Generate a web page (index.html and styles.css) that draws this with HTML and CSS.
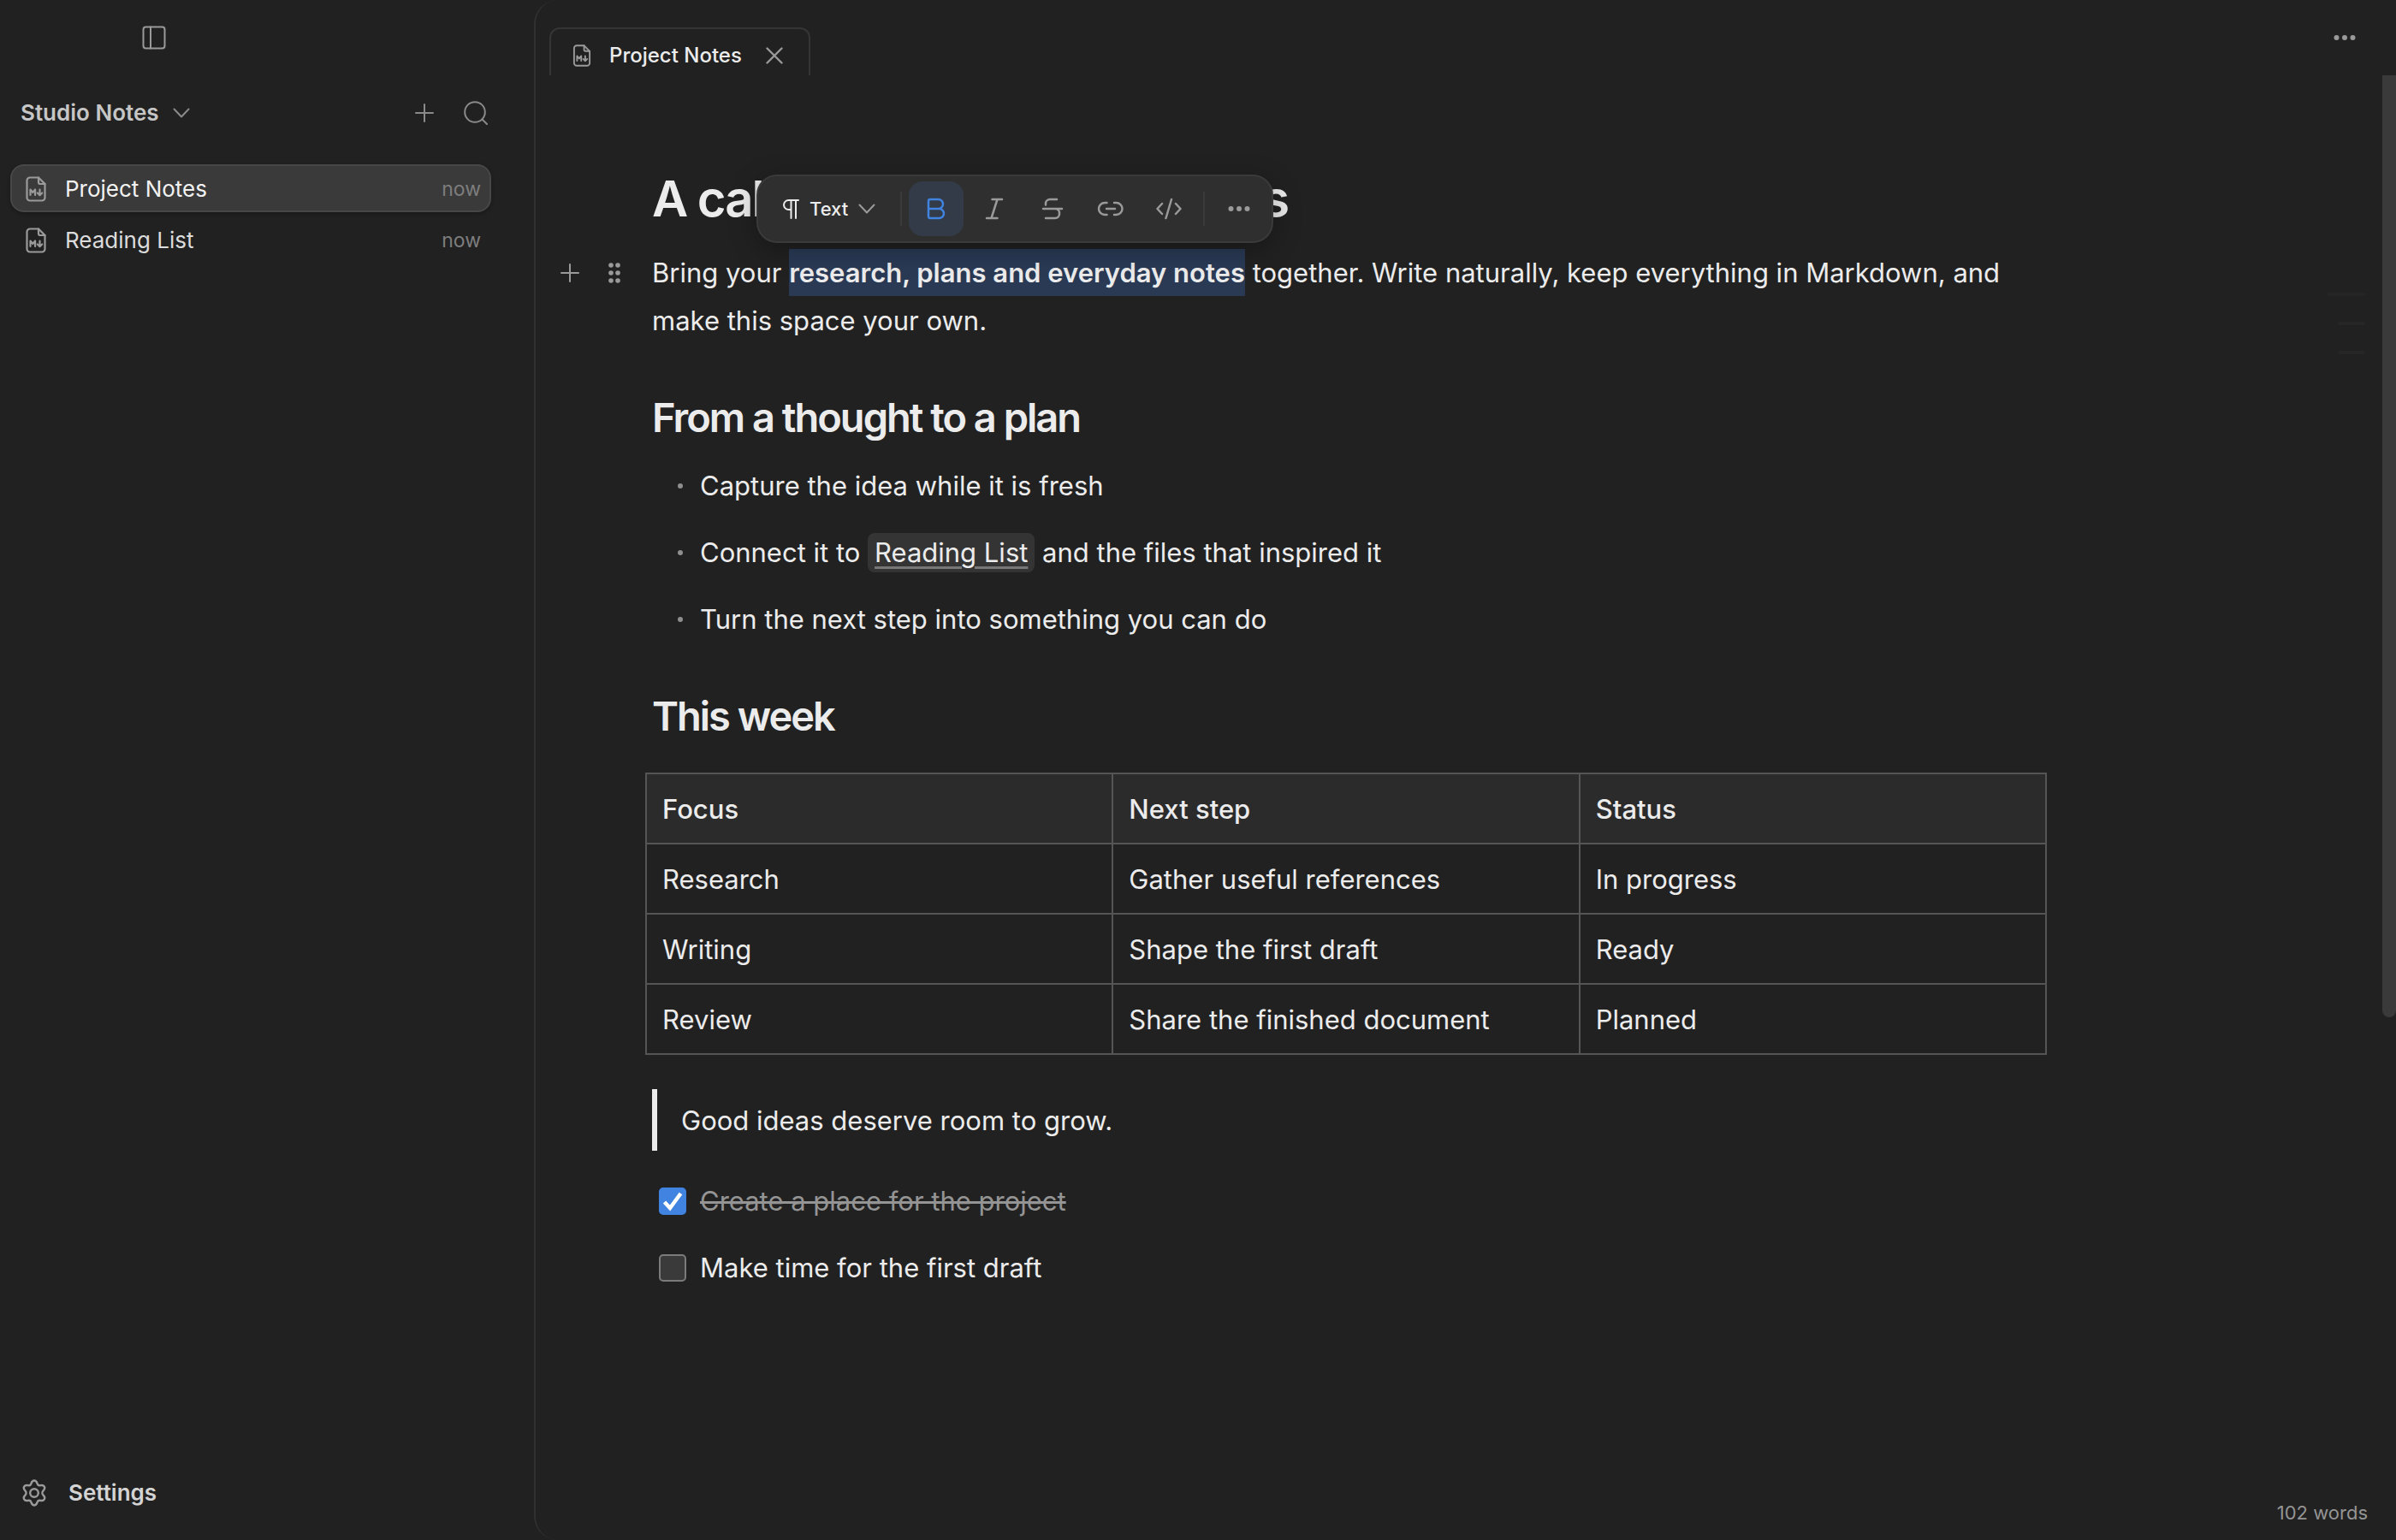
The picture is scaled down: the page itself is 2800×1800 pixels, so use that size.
FILE: index.html
```html
<!DOCTYPE html>
<html lang="en">
<head>
<meta charset="utf-8">
<title>Project Notes</title>
<link rel="stylesheet" href="styles.css">
</head>
<body>
<svg class="sprite" aria-hidden="true">
  <symbol id="icon-markdown" viewBox="0 0 24 30">
    <g stroke-width="2.200"><path d="M15 1.500H5A3.500 3.500 0 0 0 1.500 5v20A3.500 3.500 0 0 0 5 28.500h14a3.500 3.500 0 0 0 3.500-3.500V9z"/>
    <path d="M15 1.500V7a2 2 0 0 0 2 2h5.500"/>
    <path d="M5.500 22v-6.500l2.800 3.500 2.800-3.500V22M16.500 15.500V22M13.800 19.500l2.700 2.700 2.700-2.700"/></g>
  </symbol>
  <symbol id="icon-chevron" viewBox="0 0 20 12"><path d="M1.500 1.500 10 10.500l8.500-9"/></symbol>
  <symbol id="icon-plus" viewBox="0 0 22 22"><path d="M11 1v20M1 11h20"/></symbol>
  <symbol id="icon-dots" viewBox="0 0 26 8"><g fill="currentColor" stroke="none"><circle cx="3.500" cy="4" r="3"/><circle cx="13" cy="4" r="3"/><circle cx="22.500" cy="4" r="3"/></g></symbol>
</svg>
<div class="app">
  <aside class="sidebar">
    <div class="sidebar-top">
      <button class="icon-button" aria-label="Toggle sidebar">
        <svg class="icon toggle-icon" viewBox="0 0 28 28"><rect x="1.500" y="1.500" width="25" height="25" rx="3"/><path d="M10 1.500v25"/></svg>
      </button>
    </div>
    <div class="workspace">
      <button class="workspace-name">Studio Notes <svg class="icon chevron"><use href="#icon-chevron"/></svg></button>
      <button class="icon-button" aria-label="New note"><svg class="icon plus"><use href="#icon-plus"/></svg></button>
      <button class="icon-button" aria-label="Search"><svg class="icon search-icon" viewBox="0 0 28 28"><circle cx="13" cy="13" r="11.800"/><path d="m21.500 21.500 5.500 5.500"/></svg></button>
    </div>
    <nav class="notes">
      <a class="note selected" href="#project"><svg class="icon file"><use href="#icon-markdown"/></svg><span class="note-title">Project Notes</span><span class="note-time">now</span></a>
      <a class="note" href="#reading"><svg class="icon file"><use href="#icon-markdown"/></svg><span class="note-title">Reading List</span><span class="note-time">now</span></a>
    </nav>
    <button class="settings">
      <svg class="icon gear" viewBox="0 0 28 32"><path stroke-width="2.400" d="M10.300 5.300C11 3 12 1.500 14 1.500s3 1.500 3.700 3.800c.4 1.500 1.700 2.200 3.200 1.900 2-.5 3.900-.3 4.900 1.400 1 1.800.3 3.300-1.400 5-1.300 1.300-1.300 3.500 0 4.800 1.700 1.700 2.400 3.200 1.400 5-1 1.700-2.900 1.900-4.900 1.400-1.500-.3-2.800.4-3.200 1.900-.7 2.300-1.700 3.800-3.700 3.800s-3-1.500-3.700-3.800c-.4-1.500-1.700-2.200-3.200-1.900-2 .5-3.900.3-4.900-1.400-1-1.800-.3-3.300 1.400-5 1.300-1.300 1.300-3.500 0-4.800-1.700-1.700-2.400-3.200-1.400-5 1-1.700 2.900-1.900 4.900-1.400 1.500.3 2.800-.4 3.200-1.900z"/><circle stroke-width="2.400" cx="14" cy="16" r="4.800"/></svg>
      Settings
    </button>
  </aside>
  <main class="panel">
    <header class="tabs">
      <div class="tab">
        <svg class="icon file small"><use href="#icon-markdown"/></svg>
        <span>Project Notes</span>
        <button class="close" aria-label="Close tab"><svg class="icon cross" viewBox="0 0 20 20"><path stroke-width="2.400" d="m1.500 1.500 17 17M18.500 1.500l-17 17"/></svg></button>
      </div>
      <button class="icon-button" aria-label="More"><svg class="icon dots"><use href="#icon-dots"/></svg></button>
    </header>
    <div class="editor">
      <article class="document">
        <h1>A calm place for bright ideas</h1>
        <div class="block">
          <div class="handles">
            <button class="handle" aria-label="Add block"><svg class="icon plus"><use href="#icon-plus"/></svg></button>
            <button class="handle" aria-label="Move block"><svg class="icon grip" viewBox="0 0 16 26"><g fill="currentColor" stroke="none"><circle cx="4" cy="4" r="2.800"/><circle cx="12" cy="4" r="2.800"/><circle cx="4" cy="13" r="2.800"/><circle cx="12" cy="13" r="2.800"/><circle cx="4" cy="22" r="2.800"/><circle cx="12" cy="22" r="2.800"/></g></svg></button>
          </div>
          <p>Bring your <strong class="selection">research, plans and everyday notes</strong> together. Write naturally, keep everything in Markdown, and make this space your own.</p>
          <div class="toolbar" role="toolbar" aria-label="Formatting">
            <button class="block-type"><svg class="icon pilcrow" viewBox="0 0 20 24"><path d="M19 2H7.500a5.500 5.500 0 0 0 0 11H10M10.500 2v21M16 2v21"/></svg>Text<svg class="icon chevron"><use href="#icon-chevron"/></svg></button>
            <span class="separator"></span>
            <button class="tool active" aria-label="Bold"><svg class="icon glyph" viewBox="0 0 32 32"><path stroke-width="2.500" d="M9 5h9.500a5.500 5.500 0 0 1 0 11H7V7a2 2 0 0 1 2-2zM7 16h12.500a5.500 5.500 0 0 1 0 11H9a2 2 0 0 1-2-2z"/></svg></button>
            <button class="tool" aria-label="Italic"><svg class="icon glyph" viewBox="0 0 32 32"><path stroke-width="2.500" d="M13.500 5H25M7 27h12.500M19.500 5l-7 22"/></svg></button>
            <button class="tool" aria-label="Strikethrough"><svg class="icon glyph" viewBox="0 0 32 32"><path stroke-width="2.500" d="M21 5h-8a5 5 0 0 0-5 5v1.500M5 16h22M18 16h1a5 5 0 0 1 5 5v1a5 5 0 0 1-5 5H8"/></svg></button>
            <button class="tool" aria-label="Link"><svg class="icon glyph" viewBox="0 0 32 32"><path stroke-width="2.500" d="M11.500 23H9A7 7 0 0 1 9 9h2.500M20 9h2.500a7 7 0 0 1 0 14H20M11 16h10"/></svg></button>
            <button class="tool" aria-label="Code"><svg class="icon glyph" viewBox="0 0 32 32"><path stroke-width="2.500" d="M8 10l-5.500 6L8 22M24 10l5.500 6-5.500 6M19 5l-6.500 22"/></svg></button>
            <span class="separator"></span>
            <button class="tool" aria-label="More formatting"><svg class="icon dots"><use href="#icon-dots"/></svg></button>
          </div>
        </div>
        <h2>From a thought to a plan</h2>
        <ul class="bullets">
          <li>Capture the idea while it is fresh</li>
          <li>Connect it to <a class="mention" href="#reading">Reading List</a> and the files that inspired it</li>
          <li>Turn the next step into something you can do</li>
        </ul>
        <h2>This week</h2>
        <table>
          <thead><tr><th>Focus</th><th>Next step</th><th>Status</th></tr></thead>
          <tbody>
            <tr><td>Research</td><td>Gather useful references</td><td>In progress</td></tr>
            <tr><td>Writing</td><td>Shape the first draft</td><td>Ready</td></tr>
            <tr><td>Review</td><td>Share the finished document</td><td>Planned</td></tr>
          </tbody>
        </table>
        <blockquote>Good ideas deserve room to grow.</blockquote>
        <ul class="tasks">
          <li><label class="done"><input type="checkbox" checked><span>Create a place for the project</span></label></li>
          <li><label><input type="checkbox"><span>Make time for the first draft</span></label></li>
        </ul>
      </article>
      <div class="outline"><i class="mark long"></i><i class="mark"></i><i class="mark"></i></div>
      <div class="scrollbar"></div>
    </div>
    <footer class="word-count">102 words</footer>
  </main>
</div>
</body>
</html>
```
FILE: styles.css
```css
* { box-sizing: border-box; }
body { margin: 0; background: #212121; color: #ececec; font: 400 31px/56px Inter, "Liberation Sans", sans-serif; }
h1, h2, p, ul, blockquote { margin: 0; padding: 0; }
ul { list-style: none; }
button { margin: 0; padding: 0; border: 0; background: none; color: inherit; font: inherit; display: flex; align-items: center; }
a { color: inherit; text-decoration: none; }
.sprite { display: none; }
.icon { flex: none; fill: none; stroke: currentColor; stroke-width: 2; stroke-linecap: round; stroke-linejoin: round; color: #9a9a9a; }
.app { display: grid; grid-template-columns: 624px 1fr; min-height: 100vh; }

.sidebar { display: flex; flex-direction: column; padding: 16px 50px 27px 12px; font-size: 26px; }
.sidebar-top { display: flex; padding-left: 140px; }
.icon-button { width: 56px; height: 56px; justify-content: center; }
.toggle-icon, .search-icon { width: 28px; height: 28px; }
.plus { width: 22px; height: 22px; }
.chevron { width: 20px; height: 12px; }
.dots { width: 26px; height: 8px; }
.workspace { display: flex; align-items: center; gap: 4px; margin-top: 32px; padding-left: 12px; margin-right: -10px; }
.workspace-name { margin-right: auto; gap: 16px; font-weight: 600; color: #c6c6c6; }
.workspace .icon { color: #8a8a8a; }
.notes { display: flex; flex-direction: column; gap: 4px; margin-top: 32px; }
.note { display: flex; align-items: center; height: 56px; padding: 2px 10px 0 16px; border: 2px solid transparent; border-radius: 16px; color: #dcdcdc; }
.selected { background: #3a3a3a; border-color: #474747; color: #f2f2f2; box-shadow: 0 2px 4px rgba(0, 0, 0, .25); }
.file { width: 24px; height: 30px; }
.note-title { flex: 1; margin-left: 22px; }
.note-time { font-size: 23px; color: #7d7d7d; }
.settings { margin-top: auto; margin-left: 14px; gap: 26px; font-weight: 600; color: #d4d4d4; }
.gear { width: 28px; height: 32px; }

.panel { display: flex; flex-direction: column; border-left: 2px solid #303030; border-radius: 28px 0 0 28px; min-width: 0; }
.tabs { display: flex; justify-content: space-between; padding: 16px 32px 0 16px; height: 88px; }
.tab { display: flex; align-items: center; margin-top: 16px; height: 56px; padding: 8px 30px 0 25px; border: 2px solid #353535; border-bottom: 0; border-radius: 12px 12px 0 0; font-size: 24px; font-weight: 500; }
.small { width: 22px; height: 26px; margin-right: 21px; }
.close { margin-left: 28px; }
.cross { width: 20px; height: 20px; }
.editor { position: relative; flex: 1; padding: 104px 416px 0 136px; }
.document h1 { font-size: 58px; line-height: 80px; font-weight: 600; letter-spacing: -2px; white-space: nowrap; }
.document h2 { font-size: 47px; line-height: 64px; font-weight: 600; letter-spacing: -2px; margin-top: 53px; }
.block { position: relative; margin-top: 19px; }
.handles { position: absolute; right: 100%; top: 0; display: flex; gap: 12px; margin-right: 24px; }
.handle { width: 40px; height: 56px; justify-content: center; }
.grip { width: 16px; height: 26px; }
.selection { font-weight: 600; background: #2a3a55; padding: 9px 0; }
.toolbar { position: absolute; left: 122px; bottom: calc(100% + 7px); display: flex; align-items: center; gap: 4px; height: 80px; padding: 0 6px; background: #2f2f2f; border: 2px solid #3a3a3a; border-radius: 24px; box-shadow: 0 8px 32px rgba(0, 0, 0, .3); }
.block-type { height: 64px; padding: 0 21px 0 22px; gap: 12px; font-size: 22px; font-weight: 500; }
.pilcrow { width: 20px; height: 24px; color: #ececec; }
.separator { width: 2px; height: 40px; margin: 0 4px; background: #3a3a3a; }
.tool { width: 64px; height: 64px; justify-content: center; border-radius: 16px; }
.glyph { width: 32px; height: 32px; }
.active { background: #323b47; }
.active .icon { color: #4083e0; }
.bullets, .tasks { display: flex; flex-direction: column; gap: 22px; }
.bullets { margin-top: 20px; }
.bullets li { display: flex; align-items: center; white-space: pre; padding-left: 30px; }
.bullets li::before { content: ""; width: 6px; height: 6px; border-radius: 3px; background: #8e8e8e; margin-right: 20px; }
.mention { padding: 0 8px; line-height: 46px; background: #343434; border-radius: 8px; text-decoration: underline 3px #777; text-underline-offset: 5px; }
table { width: calc(100% + 16px); margin: 34px -8px 0; border-collapse: collapse; table-layout: fixed; }
th, td { height: 82px; padding: 2px 18px 0; border: 2px solid #555; text-align: left; font-weight: 400; }
th { background: #2b2b2b; font-weight: 500; }
blockquote { margin-top: 40px; padding: 9px 0 7px 28px; border-left: 6px solid #ececec; }
.tasks { margin-top: 31px; padding-left: 8px; }
.tasks label { display: flex; align-items: center; gap: 16px; }
.tasks input { appearance: none; width: 32px; height: 32px; margin: 0; border: 2px solid #7b7b7b; border-radius: 5px; background: #3a3a3a; }
.tasks input:checked { border-color: #4083e0; background: #4083e0 url("data:image/svg+xml,%3Csvg xmlns='http://www.w3.org/2000/svg' viewBox='0 0 28 28' fill='none' stroke='white' stroke-width='4.500'%3E%3Cpath d='M4.500 15l6.500 7L23.500 5'/%3E%3C/svg%3E"); }
.done { color: #949494; text-decoration: line-through 3px; }
.outline { position: absolute; right: 36px; top: 254px; display: flex; flex-direction: column; align-items: flex-end; gap: 30px; }
.mark { width: 32px; height: 4px; border-radius: 2px; background: #262626; }
.long { width: 44px; }
.scrollbar { position: absolute; right: 0; top: 0; width: 16px; height: 1101px; border-radius: 0 0 8px 8px; background: #3a3a3a; }
.word-count { align-self: flex-end; padding: 0 33px 16px 0; font-size: 22px; line-height: 32px; color: #949494; }
```
